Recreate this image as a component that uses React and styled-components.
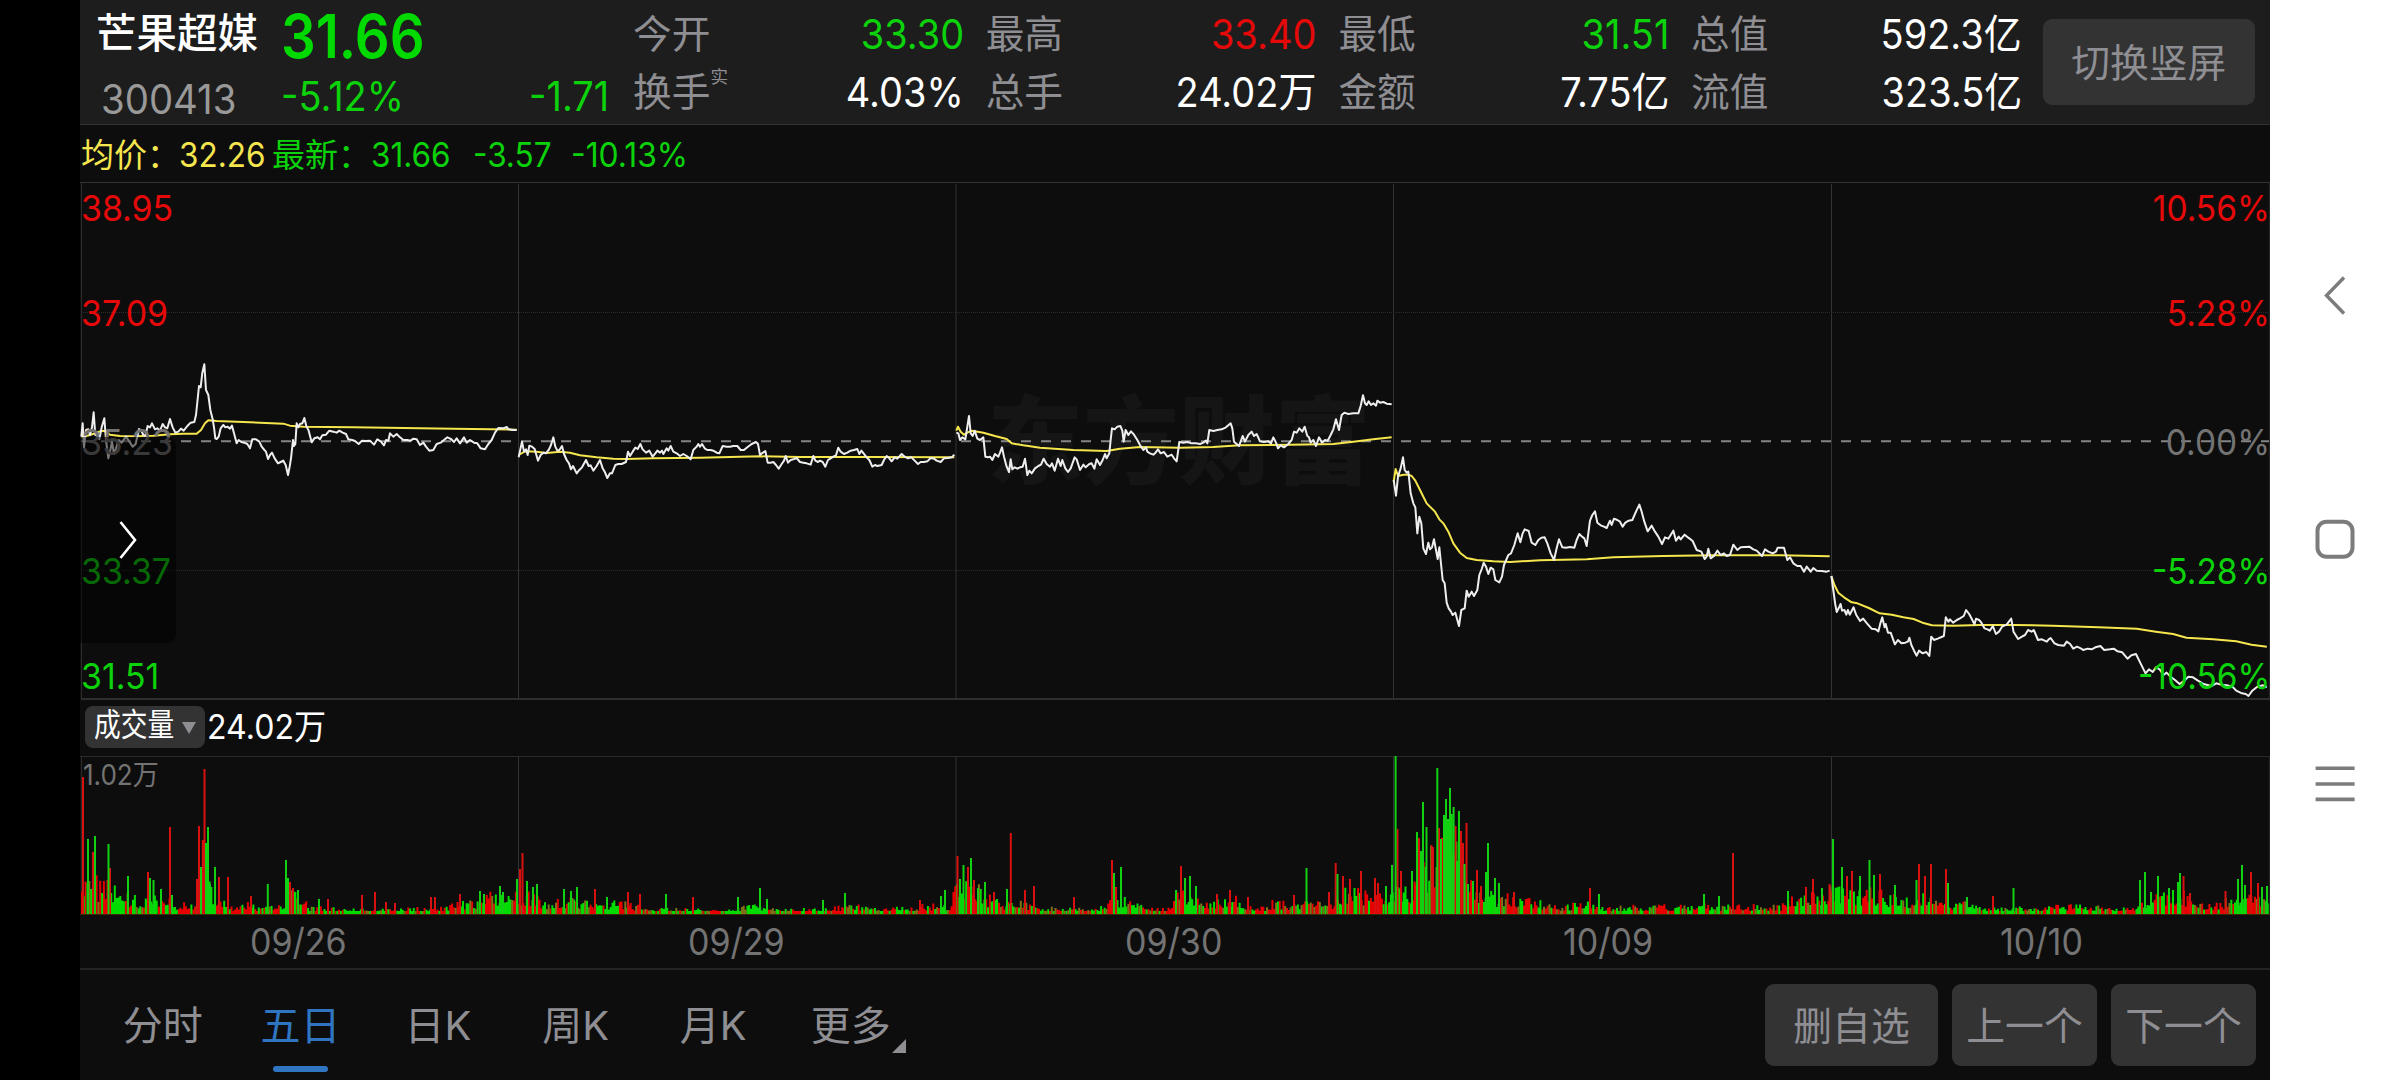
import styled, { createGlobalStyle, css } from 'styled-components'

const colors = {
  up: '#e60909',
  down: '#0cd20c',
  average: '#f5e64e',
  text: '#ffffff',
  label: '#8e8e93',
  muted: '#737373',
  line: '#333333',
  button: '#333333',
  active: '#2f75c2'
}

const GlobalStyle = createGlobalStyle`
  body {
    margin: 0;
    background: #000;
    font-family: Inter, 'Noto Sans CJK SC', sans-serif;
  }
`

const Screen = styled.div`
  display: flex;
  width: 2400px;
  height: 1080px;
  overflow: hidden;
  background: #000;
`

const Main = styled.main`
  display: flex;
  flex-direction: column;
  width: 2190px;
  margin-left: 80px;
  background: #0d0d0d;
`

// Figures are set a little condensed, anchored on the side they align to
const Num = styled.span`
  display: inline-block;
  white-space: pre;
  color: ${props => props.$color || colors.text};
  font-size: ${props => props.$size || 40.8}px;
  font-weight: ${props => props.$weight || 400};
  transform: scaleX(${props => props.$squeeze || 0.93});
  transform-origin: ${props => props.$right ? 'right' : 'left'} center;
`

const Header = styled.header`
  box-sizing: border-box;
  display: flex;
  height: 125px;
  background: #1d1d1d;
  border-bottom: 1px solid ${colors.line};
`

const Stock = styled.div`
  display: flex;
  width: 553px;
`

const StockId = styled.div`
  display: flex;
  flex-direction: column;
  width: 201px;
`

const StockName = styled.div`
  padding-left: 16px;
  color: ${colors.text};
  font-size: 40.5px;
  font-weight: 500;
  line-height: 68px;
  white-space: nowrap;
`

const StockCode = styled.div`
  padding-left: 21px;
  line-height: 62px;
`

const Quote = styled.div`
  display: flex;
  flex-direction: column;
  flex: 1;
`

const QuotePrice = styled.div`
  height: 66px;
  line-height: 73px;
`

const QuoteChange = styled.div`
  display: flex;
  justify-content: space-between;
  padding-right: 24px;
  line-height: 60px;
`

const Stats = styled.div`
  display: grid;
  grid-template-columns: repeat(4, 352.7px);
  grid-template-rows: 58px 58px;
  padding-top: 5px;
  line-height: 58px;
`

const Stat = styled.div`
  display: flex;
  justify-content: space-between;
  padding-right: 22px;
`

const StatLabel = styled.span`
  display: flex;
  color: ${colors.label};
  font-size: 38.7px;
`

const StatMark = styled.sup`
  font-size: 17.5px;
  line-height: 27px;
`

const Button = styled.button`
  flex: none;
  width: ${props => props.$width}px;
  height: ${props => props.$height}px;
  padding: 0 0 4px;
  border: 0;
  border-radius: 9px;
  background: ${colors.button};
  color: ${colors.label};
  font-family: inherit;
  font-size: 38.8px;
  white-space: nowrap;
`

const HeaderAction = styled.div`
  margin-left: -1px;
  padding-top: 19px;
`

const Legend = styled.div`
  display: grid;
  grid-template-columns: 98px 93px 99px 102px 98px auto;
  height: 57px;
  padding-left: 1px;
  line-height: 60px;
`

const LegendLabel = styled.span`
  color: ${props => props.$color};
  font-size: 33px;
  white-space: nowrap;
`

const PricePanel = styled.section`
  position: relative;
  height: 518px;
`

const Watermark = styled.div`
  position: absolute;
  top: 205px;
  left: 907px;
  color: #151515;
  font-family: 'Noto Sans CJK SC', sans-serif;
  font-size: 96px;
  font-weight: 900;
  line-height: 96px;
  white-space: nowrap;
`

const ChartSvg = styled.svg`
  position: relative;
  display: block;
`

const AxisLabel = styled.div`
  position: absolute;
  top: ${props => props.$y - 20}px;
  ${props => props.$right ? css`right: 0;` : css`left: 1px;`}
  line-height: 40px;
`

const Drawer = styled.div`
  position: absolute;
  top: 255px;
  left: 0;
  display: flex;
  align-items: center;
  justify-content: center;
  width: 96px;
  height: 206px;
  border-radius: 0 8px 8px 0;
  background: rgba(0, 0, 0, 0.5);
`

const VolumeHeader = styled.div`
  display: flex;
  align-items: center;
  box-sizing: border-box;
  height: 56px;
  padding-bottom: 2px;
  line-height: 38px;
`

const Indicator = styled.div`
  display: flex;
  align-items: center;
  box-sizing: border-box;
  width: 120px;
  height: 42px;
  margin: 0 2px 0 5px;
  padding-left: 9px;
  border-radius: 8px;
  background: ${colors.button};
`

const IndicatorName = styled.span`
  width: 88px;
`

const Caret = styled.i`
  margin-top: 2px;
  border: solid transparent;
  border-width: 12px 7px 0;
  border-top-color: ${colors.label};
`

const VolumePanel = styled.section`
  position: relative;
  height: 159px;
`

const VolumeMax = styled.div`
  position: absolute;
  top: 0;
  left: 3px;
  line-height: 38px;
`

const Dates = styled.div`
  display: grid;
  grid-template-columns: repeat(5, 437.6px);
  height: 53px;
  line-height: 54px;
`

const DateCell = styled.div`
  padding-left: 170px;
`

const Footer = styled.footer`
  box-sizing: border-box;
  display: flex;
  height: 112px;
  padding: 0 14px;
  border-top: 2px solid #242424;
`

const Tab = styled.div`
  position: relative;
  width: 137.6px;
  color: ${props => props.$active ? colors.active : colors.label};
  font-size: 40px;
  line-height: 111px;
  text-align: center;
  white-space: nowrap;

  ${props => props.$active && css`
    &::after {
      content: '';
      position: absolute;
      bottom: 8px;
      left: 41px;
      width: 55px;
      height: 6px;
      border-radius: 3px;
      background: ${colors.active};
    }
  `}
`

const MoreCorner = styled.i`
  position: absolute;
  right: 14px;
  bottom: 27px;
  border: solid transparent;
  border-width: 14px 0 0 14px;
  border-top: 0;
  border-bottom: 14px solid ${colors.label};
`

const FooterActions = styled.div`
  display: flex;
  gap: 14px;
  margin-left: auto;
  padding-top: 14px;
`

const SystemNav = styled.nav`
  position: relative;
  display: flex;
  flex-direction: column;
  align-items: center;
  gap: 204px;
  width: 130px;
  box-sizing: border-box;
  padding-top: 275px;
  background: #fff;
`

const stats = [
  ['今开', '33.30', colors.down],
  ['最高', '33.40', colors.up],
  ['最低', '31.51', colors.down],
  ['总值', '592.3亿'],
  ['换手', '4.03%', colors.text, '实'],
  ['总手', '24.02万'],
  ['金额', '7.75亿'],
  ['流值', '323.5亿']
]

const axis = [
  [26, '38.95', '10.56%', colors.up, colors.up],
  [130.5, '37.09', '5.28%', colors.up, colors.up],
  [260, '35.23', '0.00%', colors.muted, colors.muted],
  [389, '33.37', '-5.28%', colors.down, colors.down],
  [494, '31.51', '-10.56%', colors.down, colors.down]
]

const dates = ['09/26', '09/29', '09/30', '10/09', '10/10']
const tabs = ['分时', '五日', '日K', '周K', '月K', '更多']
const dividers = [518.5, 956, 1393.5, 1831.5]

// One entry per session: plot transform, price line and average line
const sessions = [
  {
    transform: 'translate(70 340) scale(0.33333)',
    price: '34,290 38,250 42,322 48,270 55,268 60,285 66,262 71,217 76,285 82,278 88,298 95,262 103,235 108,300 115,355 121,330 126,305 132,342 138,325 146,300 155,308 168,290 178,305 188,320 197,312 207,267 214,272 220,285 226,288 233,258 240,262 246,250 255,268 262,265 270,272 278,252 285,262 292,265 300,237 308,262 316,278 325,275 333,266 341,272 352,258 362,248 373,246 378,225 387,138 392,142 397,98 403,73 408,150 415,165 421,210 428,238 432,262 436,295 440,297 446,290 452,265 460,255 466,262 472,260 480,266 486,257 492,280 500,310 506,300 514,306 523,308 532,312 540,325 547,298 558,298 568,305 575,320 583,330 588,335 594,357 600,345 606,338 614,355 624,370 632,366 640,362 647,375 654,405 659,380 663,355 669,300 672,318 676,312 680,250 685,262 690,252 697,250 703,234 709,258 716,272 725,307 733,295 743,292 750,298 757,286 768,284 778,272 790,275 800,278 808,272 818,278 828,282 835,298 846,300 855,303 866,312 876,302 888,303 900,302 912,314 922,298 932,304 942,316 948,300 955,302 960,280 970,290 980,282 990,292 1000,300 1012,300 1022,302 1030,296 1040,298 1050,315 1060,308 1068,320 1078,332 1090,330 1100,312 1112,308 1122,300 1132,292 1143,297 1152,306 1160,295 1170,310 1182,292 1190,308 1200,300 1212,308 1222,310 1232,325 1245,328 1255,312 1265,300 1275,278 1285,264 1300,265 1310,261 1316,268 1328,270 1340,270',
    average: '34,292 60,285 90,274 105,272 120,284 150,288 200,289 250,287 300,283 340,281 380,281 393,270 405,250 415,241 440,243 540,247 640,251 660,257 700,260 850,262 1000,264 1150,266 1340,269'
  },
  {
    transform: 'translate(500 380) scale(0.33333)',
    price: '56,232 66,185 72,215 78,208 83,225 88,197 96,200 104,207 114,242 122,225 130,218 138,220 147,208 153,195 160,172 166,200 172,212 178,210 186,198 192,222 200,240 207,250 213,268 219,258 230,280 238,270 246,262 258,240 266,258 272,256 280,272 290,258 300,240 308,265 314,275 322,294 330,280 336,280 346,255 355,252 365,252 378,246 384,215 390,228 398,215 406,203 413,207 421,192 428,208 438,218 448,212 458,230 466,220 472,212 480,218 486,212 490,222 500,205 505,212 512,198 520,215 530,220 540,228 550,222 560,228 572,238 580,210 590,200 595,192 600,200 606,192 614,205 622,210 632,210 640,212 650,218 658,220 668,198 680,200 690,200 700,198 712,198 722,210 732,210 742,202 755,192 768,186 774,192 780,225 786,220 796,213 803,248 812,248 820,246 828,255 836,266 845,252 852,242 857,228 864,248 872,240 880,238 890,234 900,246 910,248 920,250 932,254 940,228 946,242 954,246 960,242 968,246 976,260 984,240 992,235 1000,230 1008,226 1015,203 1022,215 1032,222 1042,218 1052,212 1062,210 1072,207 1078,222 1084,212 1092,222 1100,232 1108,240 1117,260 1125,255 1132,258 1145,255 1152,240 1160,228 1168,235 1175,244 1184,232 1192,236 1205,222 1214,230 1224,235 1234,232 1244,242 1254,252 1262,246 1272,246 1282,244 1292,234 1302,236 1310,242 1322,246 1332,235 1344,234 1355,232 1363,224',
    average: '56,225 75,214 110,215 140,219 180,215 210,218 240,226 290,232 340,236 380,237 460,235 600,233 780,229 900,231 1100,231 1363,232'
  },
  {
    transform: 'translate(940 360) scale(0.33333)',
    price: '49,218 55,220 60,240 67,232 76,238 82,200 87,168 92,220 98,228 104,212 112,236 120,240 130,232 136,290 144,292 150,290 157,300 165,282 175,290 180,278 186,262 192,290 200,320 207,336 212,298 217,328 224,322 232,326 240,322 248,320 255,296 262,345 268,332 275,340 285,325 295,318 303,314 311,296 320,312 330,320 336,310 344,332 354,296 362,318 367,300 376,325 384,336 392,325 404,292 410,298 420,330 430,314 437,322 448,312 455,310 463,326 470,298 480,315 488,300 495,282 500,295 508,280 512,240 516,205 524,208 532,200 541,198 547,212 551,245 557,210 565,225 573,214 582,224 592,240 600,255 610,270 618,262 622,275 630,280 640,284 645,280 654,268 662,280 672,276 682,290 695,284 702,295 710,304 718,246 730,248 742,246 755,250 768,250 780,252 790,248 798,242 802,250 808,210 820,213 832,210 845,208 858,202 872,190 877,205 882,245 890,252 897,258 908,228 915,245 925,225 935,215 942,228 950,222 960,244 972,246 985,244 993,250 1000,232 1008,248 1014,265 1022,256 1032,262 1045,252 1055,240 1062,215 1070,218 1078,205 1087,215 1094,200 1102,228 1107,232 1112,248 1120,240 1128,258 1137,232 1146,248 1155,240 1163,242 1172,225 1180,208 1188,178 1197,210 1205,165 1213,158 1225,162 1240,160 1255,160 1262,138 1269,106 1275,130 1280,135 1286,124 1293,135 1300,130 1308,137 1312,122 1320,128 1330,126 1340,131 1355,133',
    average: '49,212 54,200 62,215 72,224 82,218 95,212 130,218 165,228 200,237 215,250 250,256 300,263 400,270 500,273 540,266 600,261 720,263 820,261 900,256 1050,254 1180,252 1240,245 1300,238 1355,232'
  },
  {
    transform: 'translate(1380 440) scale(0.33333)',
    price: '41,120 48,167 54,110 62,85 69,52 74,90 80,98 85,95 92,160 100,190 106,202 112,280 118,230 124,250 130,325 138,342 145,308 150,328 156,322 162,298 168,330 173,357 178,322 188,420 194,430 200,488 206,505 213,515 218,525 226,518 237,558 244,510 254,505 260,452 266,470 275,455 282,468 292,450 298,405 306,385 311,368 318,380 325,402 332,383 340,388 346,420 358,427 366,410 372,375 385,345 393,340 403,315 413,280 421,307 428,280 434,268 446,273 455,308 466,315 475,300 484,293 494,292 502,310 512,340 522,360 530,325 537,298 547,322 558,323 570,321 583,323 590,300 598,282 606,290 613,295 620,318 630,242 637,225 645,214 652,248 662,256 672,260 680,264 690,242 695,255 702,236 712,240 720,245 728,260 736,248 746,242 757,240 768,215 778,194 785,215 793,245 803,274 815,257 825,275 835,290 846,312 855,292 865,296 880,272 888,302 896,290 902,298 914,284 925,293 938,303 950,330 964,335 974,357 980,350 985,326 992,355 1002,348 1012,332 1022,345 1032,340 1040,348 1050,345 1060,314 1072,330 1082,322 1095,321 1108,320 1120,328 1130,332 1146,348 1155,328 1165,335 1178,340 1188,335 1193,323 1212,323 1222,360 1230,352 1240,370 1252,378 1262,378 1272,395 1280,380 1292,395 1300,384 1310,392 1325,393 1340,395 1349,392',
    average: '41,125 47,87 54,108 70,104 85,104 95,108 106,122 120,150 140,190 165,215 178,238 190,250 205,275 220,310 240,338 260,354 290,360 340,364 390,366 480,361 620,358 700,352 850,348 1000,346 1200,346 1349,349'
  },
  {
    transform: 'translate(1800 380) scale(0.38265 0.33333)',
    price: '82,588 87,630 92,672 96,696 101,685 106,672 110,692 116,690 121,704 125,690 130,704 140,682 147,705 157,723 165,716 175,730 187,746 198,748 205,754 210,730 215,712 221,742 224,732 230,758 237,758 248,793 256,780 265,790 275,788 282,785 286,773 291,795 298,812 305,827 311,812 320,820 330,816 338,828 343,770 350,780 360,776 376,768 381,712 388,725 392,718 400,728 410,720 418,715 428,708 434,690 442,702 448,715 456,733 460,716 468,720 474,728 482,745 490,748 496,752 504,738 512,762 520,755 528,740 540,734 552,716 558,755 570,777 580,770 588,765 596,750 605,755 611,750 622,780 632,778 645,785 650,778 655,774 665,790 675,795 690,797 697,785 706,792 714,806 724,800 735,806 740,810 752,806 762,808 772,802 785,798 795,810 810,808 820,806 830,814 842,817 856,836 866,826 878,822 890,850 903,880 912,868 922,876 930,862 940,868 950,885 958,878 968,890 980,900 992,912 1005,902 1015,890 1027,892 1040,902 1055,912 1075,918 1088,910 1100,914 1115,916 1130,920 1140,932 1155,940 1165,942 1172,948 1182,932 1195,920 1210,916 1220,922',
    average: '82,588 90,615 100,638 115,652 135,667 150,670 180,684 208,700 240,704 270,712 297,717 320,728 345,736 400,737 470,735 560,735 660,737 780,742 880,746 930,755 975,762 1010,773 1080,778 1140,784 1180,794 1220,800'
  }
]

// Typical volume along the time axis: x, height
const volumeLevels = [
  [81, 50], [90, 45], [100, 30], [110, 38], [120, 20], [130, 18], [140, 15], [152, 25], [165, 16], [180, 10], [195, 12], [200, 40], [213, 28], [222, 15], [235, 8], [250, 14], [260, 6], [282, 8], [288, 26], [302, 20], [310, 8], [350, 5], [400, 5], [430, 8], [440, 6], [450, 10], [470, 12], [490, 20], [505, 22], [512, 20],
  [518, 25], [530, 20], [550, 12], [565, 15], [590, 14], [620, 12], [640, 8], [660, 6], [700, 5], [730, 4], [750, 9], [780, 6], [820, 5], [850, 9], [870, 8], [880, 5], [920, 9], [940, 10], [950, 5],
  [956, 30], [975, 32], [985, 20], [1000, 13], [1020, 12], [1040, 8], [1060, 6], [1100, 6], [1110, 15], [1125, 15], [1132, 10], [1170, 6], [1180, 30], [1195, 22], [1210, 14], [1235, 17], [1245, 10], [1265, 6], [1275, 15], [1290, 10], [1310, 14], [1330, 8], [1345, 30], [1360, 22], [1375, 25], [1388, 14],
  [1394, 35], [1410, 25], [1416, 50], [1428, 55], [1440, 75], [1455, 75], [1462, 45], [1470, 30], [1485, 25], [1495, 18], [1510, 20], [1530, 14], [1560, 8], [1590, 14], [1605, 8], [1650, 8], [1700, 10], [1720, 8], [1760, 10], [1780, 8], [1790, 18], [1810, 20], [1830, 26],
  [1845, 30], [1860, 22], [1875, 25], [1890, 18], [1910, 16], [1925, 24], [1940, 12], [1965, 12], [1980, 8], [2010, 6], [2050, 8], [2090, 10], [2120, 5], [2135, 10], [2150, 20], [2180, 24], [2195, 10], [2220, 12], [2240, 18], [2270, 20]
]

// Single minutes that stand out: x and height
const upSpikes = [
  [83, 137], [93, 62], [110, 46], [148, 42], [170, 87], [197, 35], [199, 88], [202.8, 74], [204.5, 145], [219, 37], [228, 37], [251, 18], [290, 32], [293, 26], [328, 15], [362, 19], [375, 22], [386, 12], [395, 11], [431, 17], [435, 17], [460, 20],
  [520, 45], [522.5, 61], [595, 25], [628, 22], [640, 20], [693, 17], [920, 14],
  [957.5, 58], [968, 47], [974, 34], [994, 22], [1010.8, 81], [1025, 24], [1034, 28], [1074, 17], [1112, 54], [1116, 27], [1181, 48], [1217, 20], [1230, 24], [1248, 17], [1294, 19], [1329, 22], [1335.7, 51], [1343, 38], [1350, 35], [1361, 43], [1375, 36], [1378, 31],
  [1397.5, 85], [1401, 43], [1419, 76], [1431.5, 69], [1433, 67], [1439, 86], [1455.5, 88], [1461, 83], [1463, 71], [1466.5, 91], [1477, 44], [1481, 28], [1514, 22], [1590, 26], [1733, 61], [1806, 27], [1813, 35], [1829.5, 30],
  [1847, 38], [1852, 43], [1880, 40], [1919, 50], [1925, 38], [1931, 50], [1946, 45], [1993, 18], [2183.5, 38], [2190, 21], [2225.5, 23], [2251, 42], [2258, 31]
]

const downSpikes = [
  [88, 75], [95, 78], [108.5, 70], [128, 38], [150, 36], [153.5, 34], [161, 25], [172, 19], [201, 47], [206, 71], [208, 87], [210, 30], [215, 47], [267.8, 30], [286, 54], [288, 36], [298, 24], [319, 15], [480, 23], [484, 20], [500, 28], [503, 22],
  [517, 35], [527, 33], [533, 27], [537, 30], [564, 25], [571, 23], [577, 27], [607, 17], [666, 20], [738, 17], [760, 26], [767, 15], [823, 14], [845, 21], [941, 18], [945, 24],
  [960, 35], [963.5, 49], [971, 56], [978, 26], [985, 32], [1007, 25], [1114, 41], [1121, 47], [1176, 24], [1185, 36], [1190, 38], [1196, 28], [1306.5, 46], [1337.5, 40], [1386, 28], [1392, 49],
  [1395.6, 158], [1412, 43], [1417, 82], [1421, 63], [1423, 112], [1426.5, 87], [1437.3, 146], [1441, 75], [1444, 99], [1446, 115], [1448, 95], [1450, 126], [1451.5, 100], [1453.6, 107], [1457, 53], [1459, 103], [1464.5, 50], [1468, 30], [1473, 33], [1486, 42], [1488, 71], [1495, 36], [1499, 31], [1599, 20], [1704, 20], [1719, 18], [1788, 23], [1822, 26],
  [1833, 75], [1842, 47], [1860, 38], [1869.5, 54], [1874, 39], [1895, 29], [1916.5, 34], [1948, 31], [1967, 17], [2013.5, 26], [2140, 34], [2145, 42], [2151, 22], [2158, 38], [2169, 26], [2178, 32], [2180, 41], [2238, 35], [2242, 49], [2245, 29], [2262, 27], [2267, 28]
]

const levelAt = x => {
  const next = Math.max(1, volumeLevels.findIndex(([px]) => px >= x))
  const [x0, h0] = volumeLevels[next - 1]
  const [x1, h1] = volumeLevels[next]
  return h0 + (h1 - h0) * (x - x0) / (x1 - x0)
}

const buildVolume = () => {
  const paths = { up: '', down: '', mixed: '' }
  let seed = 17
  let rising = true
  const random = () => {
    seed = (seed * 16807) % 2147483647
    return seed / 2147483647
  }
  for (let x = 82; x < 2269; x += 1.823) {
    if (random() > 0.62) rising = !rising
    const height = Math.max(3, levelAt(x) * (0.35 + 0.8 * Math.pow(random(), 1.4)))
    const key = random() > 0.85 ? 'mixed' : rising ? 'up' : 'down'
    paths[key] += `M${x.toFixed(1)} 914v-${height.toFixed(1)}`
  }
  return paths
}

const spikePath = spikes => spikes.map(([x, h]) => `M${x} 914v-${h}`).join('')

const volume = buildVolume()

const PriceChart = () => (
  <ChartSvg width='2190' height='518' viewBox='80 182 2190 518'>
    <path d='M80 182.5H2270' stroke={colors.line} />
    <path d='M81.5 183V700M2269.3 183V700' stroke='#2c2c2c' />
    {dividers.map(x => <path key={x} d={`M${x} 184V699`} stroke='#333' />)}
    <path d='M81 312.5H2269M81 570.5H2269' stroke='#2b2b2b' strokeDasharray='1 1' />
    <path d='M81 699H2270' stroke='#2e2e2e' strokeWidth='2' />
    <path d='M81 441.3H2269' stroke='#858585' strokeWidth='2' strokeDasharray='10 10' />
    <g fill='none' strokeWidth='2' strokeLinejoin='round'>
      {sessions.map(({ transform, price, average }) => (
        <g key={transform} transform={transform}>
          <polyline points={average} stroke={colors.average} vectorEffect='non-scaling-stroke' />
          <polyline points={price} stroke='#eeeeee' vectorEffect='non-scaling-stroke' />
        </g>
      ))}
    </g>
  </ChartSvg>
)

const VolumeChart = () => (
  <ChartSvg width='2190' height='159' viewBox='80 756 2190 159'>
    <path d='M80 756.5H2270M81.5 757V914M2269.3 757V914' stroke='#2a2a2a' />
    {dividers.map(x => <path key={x} d={`M${x} 757V914`} stroke='#333' />)}
    <g fill='none' strokeWidth='2'>
      <path d={volume.up} stroke='#e80000' />
      <path d={volume.down} stroke='#00dc00' />
      <path d={volume.mixed} stroke='#80701a' />
      <path d={spikePath(upSpikes)} stroke='#d81010' />
      <path d={spikePath(downSpikes)} stroke='#12d012' />
    </g>
    <path d='M80 914.5H2270' stroke='#3a2c08' />
  </ChartSvg>
)

const App = () => (
  <Screen>
    <GlobalStyle />
    <Main>
      <Header>
        <Stock>
          <StockId>
            <StockName>芒果超媒</StockName>
            <StockCode><Num $color='#999' $squeeze={0.94}>300413</Num></StockCode>
          </StockId>
          <Quote>
            <QuotePrice><Num $color='#00da00' $size={60} $weight={600} $squeeze={0.91}>31.66</Num></QuotePrice>
            <QuoteChange>
              <Num $color={colors.down}>-5.12%</Num>
              <Num $color={colors.down} $right>-1.71</Num>
            </QuoteChange>
          </Quote>
        </Stock>
        <Stats>
          {stats.map(([label, value, color, mark]) => (
            <Stat key={label}>
              <StatLabel>{label}{mark && <StatMark>{mark}</StatMark>}</StatLabel>
              <Num $color={color} $right>{value}</Num>
            </Stat>
          ))}
        </Stats>
        <HeaderAction><Button $width={212} $height={86}>切换竖屏</Button></HeaderAction>
      </Header>

      <Legend>
        <LegendLabel $color={colors.average}>均价：</LegendLabel>
        <Num $color={colors.average} $size={33.5} $squeeze={0.94}>32.26</Num>
        <LegendLabel $color={colors.down}>最新：</LegendLabel>
        <Num $color={colors.down} $size={33.5} $squeeze={0.94}>31.66</Num>
        <Num $color={colors.down} $size={33.5} $squeeze={0.94}>-3.57</Num>
        <Num $color={colors.down} $size={33.5} $squeeze={0.95}>-10.13%</Num>
      </Legend>

      <PricePanel>
        <Watermark>东方财富</Watermark>
        <PriceChart />
        {axis.map(([y, price, percent, priceColor, percentColor]) => (
          <div key={price}>
            <AxisLabel $y={y}><Num $color={priceColor} $size={36} $squeeze={0.94}>{price}</Num></AxisLabel>
            <AxisLabel $y={y} $right><Num $color={percentColor} $size={36} $right>{percent}</Num></AxisLabel>
          </div>
        ))}
        <Drawer>
          <svg width='18' height='40' viewBox='0 0 18 40' fill='none' stroke='#fff' strokeWidth='2.6'>
            <path d='M1.5 2L16 20L1.5 38' />
          </svg>
        </Drawer>
      </PricePanel>

      <VolumeHeader>
        <Indicator>
          <IndicatorName><Num $size={31.5} $squeeze={0.85}>成交量</Num></IndicatorName>
          <Caret />
        </Indicator>
        <Num $size={34.5}>24.02万</Num>
      </VolumeHeader>
      <VolumePanel>
        <VolumeChart />
        <VolumeMax><Num $color={colors.muted} $size={28}>1.02万</Num></VolumeMax>
      </VolumePanel>
      <Dates>
        {dates.map(date => (
          <DateCell key={date}><Num $color={colors.muted} $size={37} $squeeze={0.92}>{date}</Num></DateCell>
        ))}
      </Dates>

      <Footer>
        {tabs.map(tab => (
          <Tab key={tab} $active={tab === '五日'}>
            {tab}
            {tab === '更多' && <MoreCorner />}
          </Tab>
        ))}
        <FooterActions>
          <Button $width={173} $height={82}>删自选</Button>
          <Button $width={145} $height={82}>上一个</Button>
          <Button $width={145} $height={82}>下一个</Button>
        </FooterActions>
      </Footer>
    </Main>

    <SystemNav>
      <svg width='40' height='40' viewBox='0 0 40 40' fill='none' stroke='#7c7c7c' strokeWidth='3.4'>
        <path d='M29 2.5L11.5 20.5L29 38.5' />
      </svg>
      <svg width='40' height='40' viewBox='0 0 40 40' fill='none' stroke='#7c7c7c' strokeWidth='4'>
        <rect x='2.5' y='2.8' width='35' height='35' rx='9' />
      </svg>
      <svg width='40' height='40' viewBox='0 0 40 40' fill='none' stroke='#7c7c7c' strokeWidth='3.6'>
        <path d='M0.6 5.3H39.6M0.6 21H39.6M0.6 36.4H39.6' />
      </svg>
    </SystemNav>
  </Screen>
)

export default App
